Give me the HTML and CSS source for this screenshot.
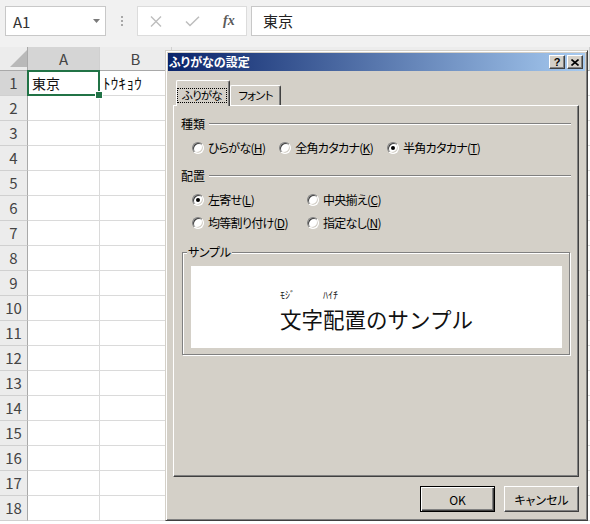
FILE: index.html
```html
<!DOCTYPE html>
<html lang="ja">
<head>
<meta charset="utf-8">
<title>ふりがなの設定</title>
<link rel="stylesheet" href="styles.css">
</head>
<body>
<div class="app">
  <div class="fbar">
    <div class="namebox"><span>A1</span><svg class="dd" width="7" height="4" viewBox="0 0 7 4"><path d="M0 0H7L3.5 4Z" fill="#7a7a7a"/></svg></div>
    <div class="sep"><span class="dots"></span></div>
    <div class="fbtns">
      <svg width="12" height="11" viewBox="0 0 12 11"><path d="M1 0.5L11 10.5M11 0.5L1 10.5" stroke="#bdbdbd" stroke-width="1.4" fill="none"/></svg>
      <svg width="15" height="11" viewBox="0 0 15 11"><path d="M1 5.5L5 9.5L14 0.8" stroke="#bdbdbd" stroke-width="1.5" fill="none"/></svg>
      <span class="fx">fx</span>
    </div>
    <div class="finput">東京</div>
  </div>
  <div class="sheet">
    <div class="row hdr">
      <span class="corner"><svg width="17" height="17" viewBox="0 0 17 17"><path d="M17 0V17H0Z" fill="#b9b9b9"/></svg></span>
      <span class="ch sel">A</span>
      <span class="ch">B</span>
      <span class="ch rest"></span>
    </div>
    <div class="row"><span class="rh sel">1</span><span class="c a1">東京</span><span class="c kana">ﾄｳｷｮｳ</span><span class="c rest"></span></div>
    <div class="row"><span class="rh">2</span><span class="c"></span><span class="c"></span><span class="c rest"></span></div>
    <div class="row"><span class="rh">3</span><span class="c"></span><span class="c"></span><span class="c rest"></span></div>
    <div class="row"><span class="rh">4</span><span class="c"></span><span class="c"></span><span class="c rest"></span></div>
    <div class="row"><span class="rh">5</span><span class="c"></span><span class="c"></span><span class="c rest"></span></div>
    <div class="row"><span class="rh">6</span><span class="c"></span><span class="c"></span><span class="c rest"></span></div>
    <div class="row"><span class="rh">7</span><span class="c"></span><span class="c"></span><span class="c rest"></span></div>
    <div class="row"><span class="rh">8</span><span class="c"></span><span class="c"></span><span class="c rest"></span></div>
    <div class="row"><span class="rh">9</span><span class="c"></span><span class="c"></span><span class="c rest"></span></div>
    <div class="row"><span class="rh">10</span><span class="c"></span><span class="c"></span><span class="c rest"></span></div>
    <div class="row"><span class="rh">11</span><span class="c"></span><span class="c"></span><span class="c rest"></span></div>
    <div class="row"><span class="rh">12</span><span class="c"></span><span class="c"></span><span class="c rest"></span></div>
    <div class="row"><span class="rh">13</span><span class="c"></span><span class="c"></span><span class="c rest"></span></div>
    <div class="row"><span class="rh">14</span><span class="c"></span><span class="c"></span><span class="c rest"></span></div>
    <div class="row"><span class="rh">15</span><span class="c"></span><span class="c"></span><span class="c rest"></span></div>
    <div class="row"><span class="rh">16</span><span class="c"></span><span class="c"></span><span class="c rest"></span></div>
    <div class="row"><span class="rh">17</span><span class="c"></span><span class="c"></span><span class="c rest"></span></div>
    <div class="row"><span class="rh">18</span><span class="c"></span><span class="c"></span><span class="c rest"></span></div>
  </div>
</div>

<div class="dialog">
  <div class="titlebar">
    <span class="ttext">ふりがなの設定</span>
    <div class="tbtns">
      <span class="tbtn q">?</span>
      <span class="tbtn"><svg width="8" height="7" viewBox="0 0 8 7"><path d="M0.5 0.5L7.5 6.5M7.5 0.5L0.5 6.5" stroke="#000" stroke-width="1.6" fill="none"/></svg></span>
    </div>
  </div>
  <div class="dbody">
    <div class="tabs">
      <div class="tab active"><span class="focus">ふりがな</span></div>
      <div class="tab">フォント</div>
    </div>
    <div class="panel">
      <div class="ghead g1"><span>種類</span><i class="etch"></i></div>
      <div class="radios r1">
        <span class="opt"><span class="radio"></span><span>ひらがな(<u>H</u>)</span></span>
        <span class="opt"><span class="radio"></span><span>全角カタカナ(<u>K</u>)</span></span>
        <span class="opt"><span class="radio on"></span><span>半角カタカナ(<u>T</u>)</span></span>
      </div>
      <div class="ghead g2"><span>配置</span><i class="etch"></i></div>
      <div class="radios r2">
        <span class="opt"><span class="radio on"></span><span>左寄せ(<u>L</u>)</span></span>
        <span class="opt"><span class="radio"></span><span>中央揃え(<u>C</u>)</span></span>
        <span class="opt"><span class="radio"></span><span>均等割り付け(<u>D</u>)</span></span>
        <span class="opt"><span class="radio"></span><span>指定なし(<u>N</u>)</span></span>
      </div>
      <fieldset class="sample">
        <legend>サンプル</legend>
        <div class="sbox">
          <span class="seg"><span class="rt">ﾓｼﾞ</span><span class="rb">文字</span></span>
          <span class="seg"><span class="rt">ﾊｲﾁ</span><span class="rb">配置</span></span>
          <span class="seg"><span class="rt"></span><span class="rb">のサンプル</span></span>
        </div>
      </fieldset>
    </div>
    <div class="buttons">
      <button class="btn default">OK</button>
      <button class="btn">キャンセル</button>
    </div>
  </div>
</div>
</body>
</html>
```

FILE: styles.css
```css
* { box-sizing: border-box; }
html, body { margin: 0; padding: 0; }
body {
  width: 590px;
  height: 524px;
  overflow: hidden;
  background: #fff;
  position: relative;
  font-family: "Noto Sans CJK JP", "Noto Sans", sans-serif;
}

/* ---------- formula bar ---------- */
.fbar {
  height: 47px;
  background: #f1f1f1;
  display: flex;
  align-items: flex-start;
  padding: 6px 0 0 5px;
}
.namebox {
  width: 101px;
  height: 30px;
  background: #fff;
  border: 1px solid #c8c8c8;
  display: flex;
  align-items: center;
  justify-content: space-between;
  padding: 0 5px 0 7px;
  font-size: 15px;
  color: #333;
}
.sep {
  width: 31px;
  height: 30px;
  display: flex;
  justify-content: center;
  align-items: center;
}
.dots {
  width: 2px;
  height: 10px;
  background: repeating-linear-gradient(#a8a8a8 0 2px, transparent 2px 4px);
}
.fbtns {
  width: 110px;
  height: 30px;
  background: #fff;
  border: 1px solid #dcdcdc;
  display: flex;
  align-items: center;
  gap: 23px;
  padding-left: 12px;
}
.fx {
  font-family: "Liberation Serif", serif;
  font-style: italic;
  font-weight: bold;
  font-size: 14px;
  color: #5a5a5a;
  line-height: 1;
}
.finput {
  flex: 1;
  height: 30px;
  margin-left: 4px;
  background: #fff;
  border: 1px solid #c8c8c8;
  border-right: none;
  padding-left: 11px;
  font-size: 15px;
  line-height: 28px;
  color: #222;
}

/* ---------- sheet ---------- */
.row {
  display: grid;
  grid-template-columns: 28px 72px 72px 1fr;
  height: 25px;
}
.row.hdr { height: 24px; }
.corner, .ch {
  background: #ececec;
  border-right: 1px solid #d0d0d0;
  border-bottom: 1px solid #a9a9a9;
}
.corner {
  display: flex;
  align-items: flex-end;
  justify-content: flex-end;
  padding: 0 0 3px 0;
  border-right: 1px solid #a9a9a9;
}
.ch {
  font-size: 15px;
  color: #444;
  text-align: center;
  line-height: 23px;
}
.ch.sel { background: #d5d5d5; }
.rh {
  background: #ececec;
  border-right: 1px solid #a9a9a9;
  border-bottom: 1px solid #d0d0d0;
  font-size: 15px;
  color: #444;
  text-align: center;
  line-height: 24px;
}
.rh.sel { background: #d5d5d5; }
.c {
  border-right: 1px solid #dadada;
  border-bottom: 1px solid #dadada;
  font-size: 14px;
  line-height: 24px;
  color: #111;
  white-space: nowrap;
}
.c.rest { border-right: none; }
.a1 {
  position: relative;
  padding-left: 4px;
}
.a1::before {
  content: "";
  position: absolute;
  left: -1px; top: -1px; right: -1px; bottom: -1px;
  border: 2px solid #217346;
}
.a1::after {
  content: "";
  position: absolute;
  right: -4px; bottom: -4px;
  width: 6px; height: 6px;
  background: #217346;
  border: 1px solid #fff;
}
.kana {
  padding-left: 3px;
  font-size: 15px;
  letter-spacing: 0.3px;
}

/* ---------- dialog ---------- */
.dialog {
  position: absolute;
  left: 165px;
  top: 50px;
  width: 423px;
  height: 471px;
  background: #d4d0c8;
  border: 1px solid;
  border-color: #d4d0c8 #404040 #404040 #d4d0c8;
  box-shadow: inset 1px 1px 0 #fff, inset -1px -1px 0 #808080;
  padding: 2px;
  font-size: 12px;
  color: #000;
  font-feature-settings: "palt";
  display: flex;
  flex-direction: column;
}
.titlebar {
  height: 18px;
  background: linear-gradient(to right, #0a246a, #a6caf0);
  display: flex;
  align-items: center;
  justify-content: space-between;
  padding: 0 2px 0 1px;
}
.ttext {
  color: #fff;
  font-weight: bold;
  font-size: 12px;
  line-height: 18px;
}
.tbtns { display: flex; gap: 2px; }
.tbtn {
  width: 16px;
  height: 14px;
  background: #d4d0c8;
  border: 1px solid;
  border-color: #fff #404040 #404040 #fff;
  box-shadow: inset -1px -1px 0 #808080;
  display: flex;
  align-items: center;
  justify-content: center;
}
.tbtn.q {
  font-family: "Liberation Sans", sans-serif;
  font-weight: bold;
  font-size: 11px;
  line-height: 12px;
}
.dbody {
  padding: 0 6px 0 5px;
  display: flex;
  flex-direction: column;
}
.tabs {
  margin-top: 9px;
  height: 25px;
  display: flex;
  align-items: flex-end;
  padding-left: 3px;
}
.tab {
  background: #d4d0c8;
  border: 1px solid;
  border-color: #fff #404040 transparent #fff;
  border-bottom: none;
  border-radius: 2px 2px 0 0;
  box-shadow: inset -1px 0 0 #808080;
  font-size: 11.5px;
  letter-spacing: -0.8px;
  white-space: nowrap;
}
.tab.active {
  position: relative;
  z-index: 1;
  width: 54px;
  height: 26px;
  margin-bottom: -1px;
  padding: 7px 2px 0 0;
}
.focus {
  display: block;
  height: 15px;
  border: 1px dotted #000;
  text-align: center;
  line-height: 13px;
}
.tab:not(.active) {
  width: 51px;
  height: 20px;
  text-align: center;
  line-height: 19px;
}
.panel {
  height: 372px;
  border: 1px solid;
  border-color: #fff #404040 #404040 #fff;
  box-shadow: inset -1px -1px 0 #808080;
  padding-left: 7px;
  display: flex;
  flex-direction: column;
}
.ghead {
  height: 14px;
  display: flex;
  align-items: center;
  gap: 4px;
  line-height: 14px;
}
.g1 { margin-top: 11px; }
.g2 { margin-top: 14px; }
.etch {
  flex: 1;
  height: 2px;
  border-top: 1px solid #808080;
  border-bottom: 1px solid #fff;
  margin-right: 7px;
}
.radios { padding-left: 11px; }
.r1 {
  margin-top: 10px;
  display: flex;
  gap: 14px;
}
.r2 {
  margin-top: 10px;
  display: grid;
  grid-template-columns: 115px auto;
  row-gap: 9px;
}
.opt {
  display: flex;
  align-items: center;
  gap: 4px;
  height: 14px;
  line-height: 14px;
  white-space: nowrap;
  letter-spacing: -0.7px;
}
.opt u { text-underline-offset: 1px; }
.radio {
  flex: none;
  position: relative;
  width: 12px;
  height: 12px;
  border-radius: 50%;
  background: #fff;
  border: 1px solid;
  border-color: #808080 #fff #fff #808080;
  box-shadow: inset 1px 1px 0 #404040, inset -1px -1px 0 #d4d0c8;
}
.radio.on::after {
  content: "";
  position: absolute;
  left: 3px; top: 3px;
  width: 4px; height: 4px;
  border-radius: 50%;
  background: #000;
}
.sample {
  margin: 15px 8px 0 1px;
  padding: 7px 7px 6px 8px;
  min-width: 0;
  border: 1px solid #808080;
  box-shadow: inset 1px 1px 0 #fff, 1px 1px 0 #fff;
}
.sample legend {
  padding: 0 1px;
  margin-left: -4px;
  line-height: 14px;
  background: #d4d0c8;
  letter-spacing: -0.3px;
}
.sbox {
  height: 82px;
  background: #fff;
  display: flex;
  justify-content: center;
  align-items: flex-start;
  padding-top: 24px;
  font-feature-settings: normal;
}
.seg {
  display: flex;
  flex-direction: column;
}
.rt {
  font-size: 10px;
  line-height: 10px;
  height: 10px;
  margin-bottom: 3px;
  color: #222;
}
.rb {
  font-size: 21.5px;
  line-height: 31px;
  color: #111;
}
.buttons {
  margin-top: 9px;
  display: flex;
  justify-content: flex-end;
  gap: 9px;
}
.btn {
  width: 75px;
  height: 26px;
  font: inherit;
  font-size: 12px;
  color: #000;
  background: #d4d0c8;
  border: 1px solid;
  border-color: #fff #404040 #404040 #fff;
  box-shadow: inset -1px -1px 0 #808080;
  padding: 0;
}
.btn.default {
  border: 1px solid #000;
  box-shadow: inset 1px 1px 0 #fff, inset -1px -1px 0 #404040, inset -2px -2px 0 #808080;
}
```
